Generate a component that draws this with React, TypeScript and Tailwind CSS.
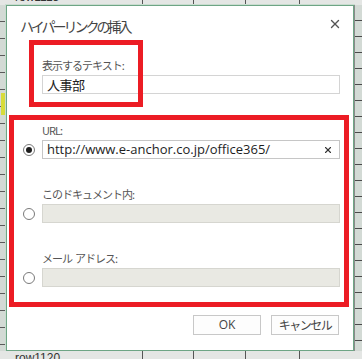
import { X } from 'lucide-react'

const jp = "font-['Noto_Sans_CJK_JP','Noto_Sans',sans-serif]"

function Radio({ checked }: { checked?: boolean }) {
  return (
    <div className="ml-[9px] flex size-[12px] shrink-0 items-center justify-center rounded-full border border-[#7a7a7a] bg-white">
      {checked && <div className="size-[6px] rounded-full bg-[#1e1e1e]" />}
    </div>
  )
}

function Field({ label, children }: { label: string; children: React.ReactNode }) {
  return (
    <div className="flex flex-col">
      <span className={`whitespace-pre pl-[28px] text-[11px] leading-[16px] tracking-[-1px] text-[#555] ${jp}`}>
        {label}
      </span>
      <div className="mt-[2px] flex items-center gap-[7px]">{children}</div>
    </div>
  )
}

function Dialog() {
  return (
    <div className="flex h-[346px] w-[348px] flex-col border border-[#6ea585] bg-white shadow-[0_0_0_1px_#c9dccf]">
      <div className="flex items-start justify-between">
        <h1 className={`pl-[13px] pt-[10px] text-[14px] leading-[20px] tracking-[-3px] text-[#444] ${jp}`}>
          ハイパーリンクの挿入
        </h1>
        <X size={14} strokeWidth={2.4} className="mr-[11px] mt-[11px] text-[#555]" />
      </div>

      {/* 表示するテキスト */}
      <div className="relative mt-[21px] flex flex-col pl-[35px]">
        <span className={`text-[11px] leading-[16px] tracking-[-1px] text-[#555] ${jp}`}>
          表示するテキスト:
        </span>
        <div className="mt-[2px] flex h-[19px] w-[298px] items-center border border-[#d4d4d4] bg-white pl-[4px]">
          <span className={`text-[13px] leading-none tracking-[-0.5px] text-[#222] ${jp}`}>人事部</span>
        </div>
        <div className="pointer-events-none absolute left-[22px] top-[-17px] h-[67px] w-[114px] border-[5px] border-[#ec1c24]" />
      </div>

      {/* リンク先 */}
      <div className="ml-[2px] mr-[4px] mt-[21px] flex flex-col border-[5px] border-[#ec1c24] pb-[15px] pt-[2px]">
        <Field label="URL:">
          <Radio checked />
          <div className="flex h-[19px] w-[298px] items-center justify-between border border-[#c6c6c6] bg-white pl-[4px] pr-[6px]">
            <span className="font-['Open_Sans',sans-serif] text-[13px] leading-none text-[#1e1e1e]">
              http://www.e-anchor.co.jp/office365/
            </span>
            <X size={10} strokeWidth={2.6} className="text-[#333]" />
          </div>
        </Field>
        <div className="mt-[27px]">
          <Field label="このドキュメント内:">
            <Radio />
            <div className="h-[19px] w-[298px] border border-[#d6d6d0] bg-[#e9e9e3]" />
          </Field>
        </div>
        <div className="mt-[27px]">
          <Field label="メール  アドレス:">
            <Radio />
            <div className="h-[19px] w-[298px] border border-[#d6d6d0] bg-[#e9e9e3]" />
          </Field>
        </div>
      </div>

      <div className="mr-[14px] mt-[8px] flex justify-end gap-[10px]">
        <button className="flex h-[20px] w-[68px] items-center justify-center border border-[#c8c8c8] bg-[#fdfdfd] font-['Open_Sans',sans-serif] text-[12px] text-[#444]">
          OK
        </button>
        <button className={`flex h-[20px] w-[68px] items-center justify-center border border-[#c8c8c8] bg-[#fdfdfd] text-[12px] tracking-[-1.5px] text-[#444] ${jp}`}>
          キャンセル
        </button>
      </div>
    </div>
  )
}

export default function App() {
  return (
    <div className="flex h-[359px] w-[362px] flex-col overflow-hidden bg-[#d6dbd7]">
      {/* top header strip */}
      <div className="flex h-[5px] shrink-0 bg-[#e4e6e4]">
        <div className="w-[143px] overflow-hidden border-r border-[#555] pl-[15px]">
          <span className="-mt-[10px] block font-['Liberation_Sans',sans-serif] text-[12px] leading-[14px] text-[#333]">
            row1113
          </span>
        </div>
        <div className="w-[51px] border-r border-[#555]" />
        <div className="w-[52px] border-r border-[#555]" />
        <div className="w-[54px] border-r border-[#555]" />
        <div className="flex-1" />
      </div>
      <div className="flex flex-1">
        <div className="flex w-[6px] flex-col bg-[#d3dad5] bg-[repeating-linear-gradient(to_bottom,transparent_0_16px,#5a5a5a_16px_17px)]">
          <div className="h-[88px]" />
          <div className="ml-[1px] h-[22px] w-[4px] bg-[#d7dc3a]" />
        </div>
        <Dialog />
        <div className="w-[8px] border-l border-[#8a8a8a] bg-[#d3dad5] bg-[repeating-linear-gradient(to_bottom,transparent_0_15px,#4a4a4a_15px_16px)]" />
      </div>
      <div className="flex h-[8px] shrink-0 bg-[#e4e6e4]">
        <div className="w-[143px] overflow-hidden border-r border-[#555] pl-[15px]">
          <span className="block font-['Liberation_Sans',sans-serif] text-[12px] leading-[14px] text-[#333]">
            row1120
          </span>
        </div>
        <div className="w-[51px] border-r border-[#555]" />
        <div className="w-[52px] border-r border-[#555]" />
        <div className="w-[54px] border-r border-[#555]" />
        <div className="flex-1" />
      </div>
    </div>
  )
}
